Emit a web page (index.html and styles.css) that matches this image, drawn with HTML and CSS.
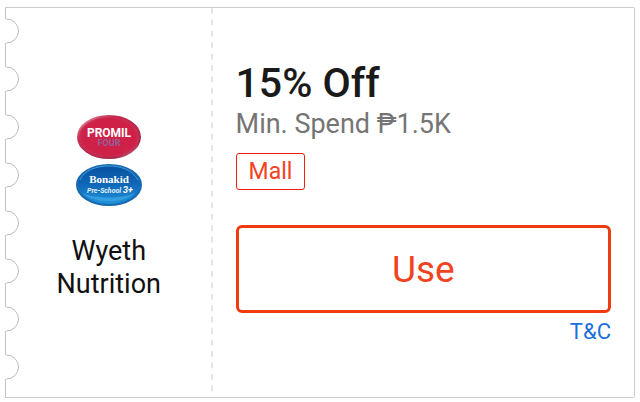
FILE: index.html
```
<!DOCTYPE html>
<html lang="en">

<head>
    <meta charset="utf-8">
    <title>Wyeth Nutrition voucher</title>
    <link rel="stylesheet" href="styles.css">
</head>

<body>

    <article class="voucher">

        <!-- Perforated left edge -->
        <svg class="voucher-edge" aria-hidden="true">
            <defs>
                <pattern id="notch" width="16" height="48" patternUnits="userSpaceOnUse">
                    <path d="M.5 0V11M.5 35V48" stroke="#c4c4c4" fill="none" />
                    <path d="M1.500 11A12 12 0 0 1 1.500 35" stroke="#b8b8b8" fill="none" />
                </pattern>
            </defs>
            <rect width="16" height="100%" fill="url(#notch)" />
        </svg>

        <div class="shop">
            <svg class="shop-logo" viewBox="0 0 70 94" role="img" aria-label="Promil Four and Bonakid Pre-School 3+">
                <defs>
                    <radialGradient id="red" cx=".5" cy=".5" r=".52">
                        <stop offset=".82" stop-color="#cf2048" />
                        <stop offset="1" stop-color="#c93a5c" />
                    </radialGradient>
                    <linearGradient id="redRim" x2="1" y2="1">
                        <stop offset="0" stop-color="#e7a3b3" />
                        <stop offset=".3" stop-color="#c32a4d" />
                        <stop offset=".8" stop-color="#a8294b" />
                        <stop offset="1" stop-color="#dc91a5" />
                    </linearGradient>
                    <linearGradient id="blue" x2="0" y2="1">
                        <stop offset="0" stop-color="#08519f" />
                        <stop offset=".5" stop-color="#0f68b8" />
                        <stop offset="1" stop-color="#2295dc" />
                    </linearGradient>
                </defs>
                <ellipse cx="35" cy="24" rx="31" ry="21" fill="url(#red)" stroke="url(#redRim)" stroke-width="2" />
                <text class="logo-promil" x="35" y="24" text-anchor="middle">PROMIL</text>
                <text class="logo-four" x="35" y="33" text-anchor="middle">FOUR</text>
                <ellipse cx="35" cy="72" rx="32" ry="20" fill="url(#blue)" stroke="#176ab2" stroke-width="2" />
                <path d="M6 67C10 57 23 53 35 53S58 57 64 67" fill="none" stroke="#409bd8" stroke-width="1" />
                <path d="M8 80C18 90 49 92 61 80C48 86 22 86 8 80Z" fill="#42afe9" opacity=".6" />
                <text class="logo-bonakid" x="35" y="70" text-anchor="middle">Bonakid</text>
                <text class="logo-school" x="13" y="80">Pre-School</text>
                <text class="logo-age" x="49" y="80">3+</text>
            </svg>
            <div class="shop-name">Wyeth Nutrition</div>
        </div>

        <div class="offer">
            <h1 class="offer-title">15% Off</h1>
            <p class="offer-min">Min. Spend ₱1.5K</p>
            <span class="tag">Mall</span>
            <button class="use-button" type="button">Use</button>
            <a class="terms" href="#terms">T&amp;C</a>
        </div>

    </article>

</body>

</html>
```
FILE: styles.css
```
* {
    box-sizing: border-box;
}

body {
    margin: 7px 5px 4px;
    background: #fff;
    color: #1a1a1a;
    font-family: Roboto, "Liberation Sans", sans-serif;
}

.voucher {
    position: relative;
    display: grid;
    grid-template-columns: 33% 1fr;
    border: 1px solid #ccc;
    border-left: 0;
    border-radius: 0 2px 2px 0;
}

/* Lies over the left side in place of a border */
.voucher-edge {
    position: absolute;
    top: 0;
    left: 0;
    width: 16px;
    height: 100%;
}

.shop {
    display: flex;
    flex-direction: column;
    align-items: center;
    justify-content: center;
    gap: 28px;
    padding: 9px 40px 0;
    /* dashed tear line */
    background: linear-gradient(#e4e4e4 52%, transparent 52%) right top / 2px calc(100% / 34) repeat-y;
}

.shop-logo {
    width: 70px;
    height: 94px;
}

.logo-promil {
    fill: #fff;
    font: bold 12px Roboto, sans-serif;
}

.logo-four {
    fill: #96609a;
    font: bold 9px Roboto, sans-serif;
}

.logo-bonakid {
    fill: #fff;
    font: bold 11px "Liberation Serif", serif;
}

.logo-school {
    fill: #e2f2fc;
    font: italic bold 7px Roboto, sans-serif;
}

.logo-age {
    fill: #fff;
    font: italic bold 9px Roboto, sans-serif;
}

.shop-name {
    color: #111;
    font-size: 27px;
    line-height: 33px;
    text-align: center;
}

.offer {
    display: flex;
    flex-direction: column;
    align-items: flex-start;
    padding: 50px 23px 52px;
}

.offer-title {
    margin: 0;
    font-size: 41px;
    font-weight: 500;
    line-height: 50px;
}

.offer-min {
    margin: 0;
    color: #757575;
    font-size: 27px;
    line-height: 32px;
}

.tag {
    margin-top: 13px;
    padding: 0 12px;
    border: 1px solid #f51d0c;
    border-radius: 3px;
    color: #f4431f;
    font-size: 23px;
    line-height: 35px;
}

.use-button {
    width: 100%;
    height: 88px;
    margin-top: 35px;
    padding: 0;
    border: 3px solid #f03a12;
    border-radius: 6px;
    background: #fff;
    color: #f1441e;
    font-family: inherit;
    font-size: 37px;
    cursor: pointer;
}

.terms {
    align-self: flex-end;
    margin-top: 6px;
    color: #1a6fdc;
    font-size: 22px;
    line-height: 26px;
    text-decoration: none;
}
```
